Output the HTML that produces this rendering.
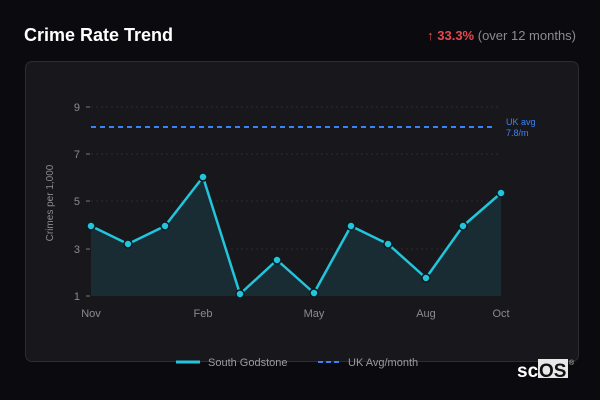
<!DOCTYPE html>
<html><head><meta charset="utf-8"><style>
body{margin:0;width:600px;height:400px;background:#0b0b0f;font-family:"Liberation Sans","DejaVu Sans",sans-serif;position:relative;overflow:hidden}
.t{position:absolute;left:24px;top:25px;color:#fff;font-weight:bold;font-size:18px}
.r{position:absolute;right:24px;top:28px;font-size:13px;color:#8a8a90}
.r b{color:#e5484d}
.card{position:absolute;left:25px;top:61px;width:552px;height:299px;background:#18181c;border:1px solid #2c2c31;border-radius:7px}
svg{position:absolute;left:0;top:0}
</style></head><body>
<div class="t">Crime Rate Trend</div>
<div class="r"><b>↑ 33.3%</b> (over 12 months)</div>
<div class="card"></div>
<svg width="600" height="400" font-family="Liberation Sans, DejaVu Sans, sans-serif">
<g stroke="#2a2b30" stroke-dasharray="2,3" stroke-width="1">
<line x1="91" y1="107" x2="501" y2="107"/><line x1="91" y1="154" x2="501" y2="154"/><line x1="91" y1="201" x2="501" y2="201"/><line x1="91" y1="249" x2="501" y2="249"/>
</g>
<g stroke="#777" stroke-width="1"><line x1="86" y1="107" x2="90" y2="107"/><line x1="86" y1="154" x2="90" y2="154"/><line x1="86" y1="201" x2="90" y2="201"/><line x1="86" y1="249" x2="90" y2="249"/><line x1="86" y1="296" x2="90" y2="296"/></g>
<g fill="#8a8a90" font-size="11" text-anchor="end"><text x="80" y="111">9</text><text x="80" y="158">7</text><text x="80" y="205">5</text><text x="80" y="253">3</text><text x="80" y="300">1</text></g>
<text transform="translate(53,203) rotate(-90)" fill="#8a8a90" font-size="10" text-anchor="middle">Crimes per 1,000</text>
<g fill="#8a8a90" font-size="11" text-anchor="middle"><text x="91" y="317">Nov</text><text x="203" y="317">Feb</text><text x="314" y="317">May</text><text x="426" y="317">Aug</text><text x="501" y="317">Oct</text></g>
<polygon fill="#1a2c33" points="91,296 91,226 128,244 165,226 203,177 240,294 277,260 314,293 351,226 388,244 426,278 463,226 501,193 501,296"/>
<line x1="91" y1="127" x2="496" y2="127" stroke="#3b82f6" stroke-width="2" stroke-dasharray="5,4"/>
<text x="506" y="125" fill="#3b82f6" font-size="9">UK avg</text><text x="506" y="136" fill="#3b82f6" font-size="9">7.8/m</text>
<polyline fill="none" stroke="#22c5dc" stroke-width="2.5" stroke-linejoin="round" points="91,226 128,244 165,226 203,177 240,294 277,260 314,293 351,226 388,244 426,278 463,226 501,193"/>
<g fill="#22c5dc" stroke="#0b1a1f" stroke-width="1.5">
<circle cx="91" cy="226" r="4"/><circle cx="128" cy="244" r="4"/><circle cx="165" cy="226" r="4"/><circle cx="203" cy="177" r="4"/><circle cx="240" cy="294" r="4"/><circle cx="277" cy="260" r="4"/><circle cx="314" cy="293" r="4"/><circle cx="351" cy="226" r="4"/><circle cx="388" cy="244" r="4"/><circle cx="426" cy="278" r="4"/><circle cx="463" cy="226" r="4"/><circle cx="501" cy="193" r="4"/>
</g>
<line x1="176" y1="362" x2="200" y2="362" stroke="#22c5dc" stroke-width="3"/>
<text x="208" y="366" fill="#9a9aa0" font-size="11">South Godstone</text>
<line x1="318" y1="362" x2="342" y2="362" stroke="#3b82f6" stroke-width="2" stroke-dasharray="5,3"/>
<text x="348" y="366" fill="#9a9aa0" font-size="11">UK Avg/month</text>
<rect x="538" y="359" width="30" height="19" fill="#e8e8e8"/>
<text x="517" y="377" fill="#fff" font-size="19" font-weight="bold">sc</text>
<text x="539" y="377" fill="#111" font-size="19" font-weight="bold">OS</text>
<text x="569" y="365" fill="#ccc" font-size="7">®</text>
</svg>
</body></html>
